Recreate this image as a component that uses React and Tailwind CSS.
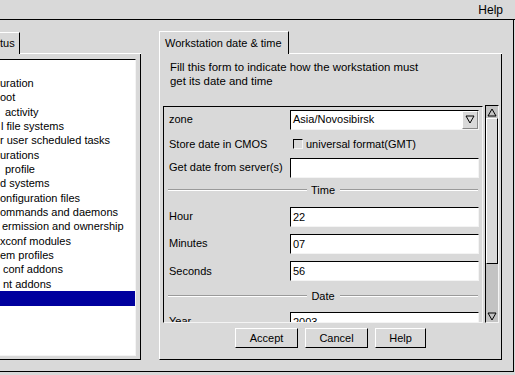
import React from "react";

const SUNKEN =
  "border border-t-black border-l-black border-b-[#f4f4f4] border-r-[#f4f4f4]";
const RAISED =
  "border border-t-white border-l-white border-b-black border-r-black";

const LIST = [
  { t: "", cls: "pl-0" },
  { t: "uration", cls: "pl-0" },
  { t: "oot", cls: "pl-0" },
  { t: "activity", cls: "pl-[5px]" },
  { t: "l file systems", cls: "pl-[1px]" },
  { t: "r user scheduled tasks", cls: "pl-0" },
  { t: "urations", cls: "pl-0" },
  { t: "profile", cls: "pl-[5px]" },
  { t: "d systems", cls: "pl-0" },
  { t: "onfiguration files", cls: "pl-0" },
  { t: "ommands and daemons", cls: "pl-0" },
  { t: "ermission and ownership", cls: "pl-[2px]" },
  { t: "xconf modules", cls: "pl-0" },
  { t: "em profiles", cls: "pl-0" },
  { t: "conf addons", cls: "pl-[3px]" },
  { t: "nt addons", cls: "pl-[3px]" },
  { t: "", cls: "pl-0", sel: true },
];

const Arrow = ({ down }) => (
  <svg width="10" height="9" viewBox="0 0 10 9">
    <polygon
      points={down ? "1,1 9,1 5,8" : "5,1 9,8 1,8"}
      fill="none"
      stroke="#000"
      strokeWidth="1"
    />
  </svg>
);

const Divider = ({ label, h }) => (
  <div className={`flex items-center px-[4px] ${h}`}>
    <div className="flex-1 h-[2px] border-t border-t-[#9a9a9a] border-b border-b-white" />
    <span className="w-[33px] text-center">{label}</span>
    <div className="flex-1 h-[2px] border-t border-t-[#9a9a9a] border-b border-b-white" />
  </div>
);

const Field = ({ label, value, h }) => (
  <div className={`flex items-center ${h}`}>
    <span className="w-[126px] pl-[5px]">{label}</span>
    <div className={`h-[20px] w-[189px] bg-white pl-[2px] leading-[18px] ${SUNKEN}`}>
      {value}
    </div>
  </div>
);

export default function App() {
  return (
    <div className="w-[515px] h-[375px] overflow-hidden bg-[#d9d9d9] text-black text-[11px] font-['Liberation_Sans',Arial,sans-serif]">
      <div className="flex h-[20px] items-center justify-end border-b border-black pr-[12px] text-[12px]">
        Help
      </div>

      <div className="flex h-[352px] w-[514px] border-r border-b border-black">
        {/* left list panel */}
        <div className="w-[141px] pt-[12px]">
          <div className="flex h-[22px] items-end">
            <div className="flex h-[22px] w-[20px] items-center border-t border-t-white border-r border-r-black text-[11px]">
              tus
            </div>
            <div className="h-[1px] flex-1 bg-white" />
          </div>
          <div className="h-[306px] border-r border-b border-black pt-[5px]">
            <div className={`h-[297px] w-[136px] overflow-hidden bg-white pt-[1.5px] border-l-0 ${SUNKEN}`}>
              {LIST.map((it, i) => (
                <div
                  key={i}
                  className={`flex h-[14.36px] items-center whitespace-nowrap ${it.cls} ${
                    it.sel ? "bg-[#00009e] text-white" : ""
                  }`}
                >
                  {it.t}
                </div>
              ))}
            </div>
          </div>
        </div>

        {/* right form panel */}
        <div className="ml-[18px] w-[343px] pt-[11px]">
          <div className="flex h-[23px] items-end">
            <div className="flex h-[23px] w-[130px] items-center border-t border-l border-t-white border-l-white border-r border-r-black pl-[5px]">
              Workstation date &amp; time
            </div>
            <div className="h-[1px] flex-1 bg-white" />
          </div>
          <div className="h-[306px] border-l border-l-white border-r border-b border-r-black border-b-black">
            <div className="pl-[10px] pt-[6px] text-[11.4px] leading-[14px]">
              <div>Fill this form to indicate how the workstation must</div>
              <div>get its date and time</div>
            </div>

            <div className="mt-[17px] flex items-start pl-[3px]">
              <div className={`mt-[1px] h-[217px] w-[320px] overflow-hidden ${SUNKEN}`}>
                <div className="mt-[1px] flex h-[23px] items-center">
                  <span className="w-[126px] pl-[5px]">zone</span>
                  <div className={`flex h-[20px] w-[189px] items-center bg-white pl-[2px] ${SUNKEN}`}>
                    <span className="flex-1">Asia/Novosibirsk</span>
                    <div className="flex h-[18px] w-[16px] items-center justify-center border-l border-t border-l-white border-t-white border-r border-b border-r-[#888] border-b-[#888] bg-[#d9d9d9]">
                      <Arrow down />
                    </div>
                  </div>
                </div>
                <div className="flex h-[26px] items-center">
                  <span className="w-[126px] pl-[5px]">Store date in CMOS</span>
                  <div className={`ml-[3px] h-[10px] w-[10px] bg-[#d9d9d9] ${SUNKEN}`} />
                  <span className="ml-[3px]">universal format(GMT)</span>
                </div>
                <Field label="Get date from server(s)" value="" h="h-[21px]" />
                <Divider label="Time" h="h-[24px]" />
                <Field label="Hour" value="22" h="h-[29px]" />
                <Field label="Minutes" value="07" h="h-[25px]" />
                <Field label="Seconds" value="56" h="h-[30px]" />
                <Divider label="Date" h="h-[20px]" />
                <Field label="Year" value="2003" h="h-[31px]" />
              </div>

              <div className={`ml-[2px] flex h-[218px] w-[14px] flex-col bg-[#c3c3c3] ${SUNKEN}`}>
                <div className="flex h-[12px] items-center justify-center">
                  <Arrow />
                </div>
                <div className={`h-[146px] bg-[#d9d9d9] ${RAISED}`} />
                <div className="flex-1" />
                <div className="flex h-[12px] items-center justify-center">
                  <Arrow down />
                </div>
              </div>
            </div>

            <div className="mt-[5px] flex justify-center gap-[7px]">
              <button className={`h-[20px] w-[63px] bg-[#d9d9d9] ${RAISED}`}>Accept</button>
              <button className={`h-[20px] w-[63px] bg-[#d9d9d9] ${RAISED}`}>Cancel</button>
              <button className={`h-[20px] w-[51px] bg-[#d9d9d9] ${RAISED}`}>Help</button>
            </div>
          </div>
        </div>
      </div>
    </div>
  );
}
